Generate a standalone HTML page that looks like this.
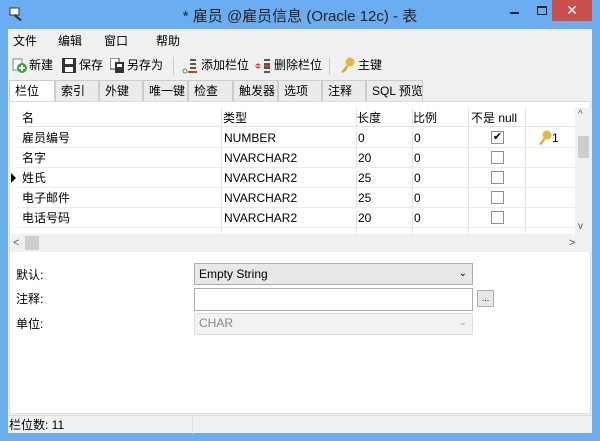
<!DOCTYPE html>
<html><head><meta charset="utf-8"><style>
*{margin:0;padding:0;box-sizing:border-box}
body{width:600px;height:441px;background:#6aadf0;font-family:"Liberation Sans","Noto Sans CJK SC",sans-serif;font-size:12px;line-height:14px;color:#000;position:relative;overflow:hidden;white-space:nowrap}
.a{position:absolute}
.title{left:0;top:8px;width:600px;text-align:center;font-size:15px;line-height:18px;color:#222}
.win{left:8px;top:29px;width:584px;height:404px;background:#f0f0f0}
.menu span{position:absolute;top:5px}
.tb{top:29px;font-size:12px}
.tab{top:51px;height:21px;border:1px solid #ccc;border-bottom:none;background:#ebebeb;padding:3px 0 0 5px;overflow:hidden}
.panel{left:1px;top:72px;width:582px;height:313px;background:#fff;border:1px solid #ddd}
.hd{top:6px;height:19px;border-bottom:1px solid #e3e3e3}
.row{height:20px;border-bottom:1px solid #ececec;width:558px;left:7px}
.row span,.hd span{position:absolute;top:3px}
.vl{width:1px;background:#e3e3e3;top:6px;height:125px}
.cb{width:13px;height:13px;border:1px solid #8e8f8f;background:#fff}
</style></head><body>
<svg class="a" style="left:9px;top:6px" width="16" height="16"><rect x="1" y="2" width="9" height="7" fill="#fff" stroke="#333"/><path d="M6 8 L13 14 L11 15 L5 10Z" fill="#333"/></svg>
<div class="a title">* 雇员 @雇员信息 (Oracle 12c) - 表</div>
<div class="a" style="left:510px;top:12px;width:9px;height:2px;background:#222"></div>
<div class="a" style="left:537px;top:6px;width:10px;height:9px;border:1px solid #222;border-top-width:2px"></div>
<div class="a" style="left:552px;top:0;width:40px;height:21px;background:#c8504b;color:#fff;text-align:center;font-size:14px;line-height:20px">✕</div>
<div class="a win">
 <div class="menu"><span style="left:5px">文件</span><span style="left:50px">编辑</span><span style="left:96px">窗口</span><span style="left:148px">帮助</span></div>
 <svg class="a" style="left:4px;top:29px" width="16" height="16"><rect x="1" y="1" width="9" height="11" fill="#fff" stroke="#789"/><circle cx="10" cy="10" r="5" fill="#3aa63a"/><path d="M10 7v6M7 10h6" stroke="#fff" stroke-width="2"/></svg>
 <span class="a tb" style="left:21px">新建</span>
 <svg class="a" style="left:54px;top:29px" width="14" height="15"><rect x="0" y="0" width="14" height="15" fill="#333"/><rect x="3" y="1" width="8" height="5" fill="#fff"/><rect x="3" y="9" width="8" height="5" fill="#fff"/></svg>
 <span class="a tb" style="left:71px">保存</span>
 <svg class="a" style="left:102px;top:29px" width="15" height="15"><rect x="0" y="0" width="9" height="11" fill="#fff" stroke="#333"/><rect x="5" y="4" width="9" height="11" fill="#333"/><rect x="7" y="6" width="5" height="3" fill="#fff"/></svg>
 <span class="a tb" style="left:119px">另存为</span>
 <div class="a" style="left:165px;top:28px;width:1px;height:18px;background:#ccc"></div>
 <svg class="a" style="left:174px;top:29px" width="16" height="16"><circle cx="3" cy="13" r="2" fill="none" stroke="#3a3"/><path d="M8 2h6M8 6h6M8 10h6" stroke="#555" stroke-width="2"/><path d="M6 14h9" stroke="#d33" stroke-width="2"/></svg>
 <span class="a tb" style="left:193px">添加栏位</span>
 <svg class="a" style="left:247px;top:29px" width="16" height="16"><circle cx="3" cy="8" r="2.5" fill="#d33"/><path d="M1 8h5" stroke="#fff"/><path d="M9 2h6M9 6h6M9 10h6M9 14h6" stroke="#555" stroke-width="2"/><path d="M9 8h6" stroke="#d33" stroke-width="2"/></svg>
 <span class="a tb" style="left:266px">删除栏位</span>
 <div class="a" style="left:321px;top:28px;width:1px;height:18px;background:#ccc"></div>
 <svg class="a" style="left:331px;top:28px" width="16" height="17"><circle cx="11" cy="5" r="4.5" fill="#e8b73a"/><path d="M8 8 L2 15 L4 16 L5 14 L6 15 L9 10" fill="#d9a52a"/></svg>
 <span class="a tb" style="left:350px">主键</span>
 <div class="a tab" style="left:1px;width:46px;background:#fff;height:23px;border-color:#ccc">栏位</div>
 <div class="a tab" style="left:47px;width:44px">索引</div>
 <div class="a tab" style="left:91px;width:44px">外键</div>
 <div class="a tab" style="left:135px;width:45px">唯一键</div>
 <div class="a tab" style="left:180px;width:45px">检查</div>
 <div class="a tab" style="left:225px;width:45px">触发器</div>
 <div class="a tab" style="left:270px;width:44px">选项</div>
 <div class="a tab" style="left:314px;width:44px">注释</div>
 <div class="a tab" style="left:358px;width:57px">SQL 预览</div>
 <div class="a panel">
  <div class="a hd" style="left:7px;width:558px"><span style="left:5px">名</span><span style="left:206px">类型</span><span style="left:340px">长度</span><span style="left:396px">比例</span><span style="left:454px">不是 null</span></div>
  <div class="a vl" style="left:211px"></div><div class="a vl" style="left:346px"></div><div class="a vl" style="left:402px"></div><div class="a vl" style="left:458px"></div><div class="a vl" style="left:515px"></div>
  <div class="a row" style="top:26px"><span style="left:5px">雇员编号</span><span style="left:207px">NUMBER</span><span style="left:341px">0</span><span style="left:397px">0</span><div class="a cb" style="left:474px;top:3px;font-size:11px;line-height:11px;text-align:center">✔</div>
   <svg class="a" style="left:521px;top:2px" width="14" height="16"><circle cx="9" cy="5" r="4.5" fill="#e8b73a"/><path d="M6 8 L1 14 L3 15 L7 10" fill="#d9a52a"/></svg><span style="left:535px">1</span></div>
  <div class="a row" style="top:46px"><span style="left:5px">名字</span><span style="left:207px">NVARCHAR2</span><span style="left:341px">20</span><span style="left:397px">0</span><div class="a cb" style="left:474px;top:3px"></div></div>
  <div class="a row" style="top:66px"><span style="left:5px">姓氏</span><span style="left:207px">NVARCHAR2</span><span style="left:341px">25</span><span style="left:397px">0</span><div class="a cb" style="left:474px;top:3px"></div></div>
  <div class="a" style="left:1px;top:71px;width:0;height:0;border-left:5px solid #000;border-top:5px solid transparent;border-bottom:5px solid transparent"></div>
  <div class="a row" style="top:86px"><span style="left:5px">电子邮件</span><span style="left:207px">NVARCHAR2</span><span style="left:341px">25</span><span style="left:397px">0</span><div class="a cb" style="left:474px;top:3px"></div></div>
  <div class="a row" style="top:106px"><span style="left:5px">电话号码</span><span style="left:207px">NVARCHAR2</span><span style="left:341px">20</span><span style="left:397px">0</span><div class="a cb" style="left:474px;top:3px"></div></div>
  <div class="a" style="left:565px;top:6px;width:16px;height:126px;background:#f0f0f0"></div>
  <div class="a" style="left:568px;top:34px;width:11px;height:22px;background:#cdcdcd"></div>
  <div class="a" style="left:568px;top:6px;font-size:10px;color:#555">^</div>
  <div class="a" style="left:568px;top:118px;font-size:10px;color:#555">v</div>
  <div class="a" style="left:0;top:132px;width:581px;height:18px;background:#f0f0f0"></div>
  <div class="a" style="left:15px;top:134px;width:14px;height:14px;background:#cdcdcd"></div>
  <div class="a" style="left:3px;top:134px;font-size:11px;color:#555">&lt;</div>
  <div class="a" style="left:559px;top:134px;font-size:11px;color:#555">&gt;</div>
  <span class="a" style="left:6px;top:166px">默认:</span>
  <div class="a" style="left:184px;top:161px;width:279px;height:22px;background:#e8e8e8;border:1px solid #adadad;padding:3px 4px">Empty String<span style="position:absolute;right:5px;top:3px;font-size:10px">&#8964;</span></div>
  <span class="a" style="left:6px;top:190px">注释:</span>
  <div class="a" style="left:184px;top:186px;width:279px;height:23px;background:#fff;border:1px solid #abadb3"></div>
  <div class="a" style="left:467px;top:188px;width:17px;height:17px;background:#e8e8e8;border:1px solid #adadad;font-size:9px;text-align:center">...</div>
  <span class="a" style="left:6px;top:215px">单位:</span>
  <div class="a" style="left:184px;top:211px;width:279px;height:22px;background:#f2f2f2;border:1px solid #ddd;padding:2px 4px;color:#888">CHAR<span style="position:absolute;right:5px;top:2px;font-size:10px;color:#aaa">&#8964;</span></div>
 </div>
 <div class="a" style="left:0;top:386px;width:584px;height:18px;background:#f0f0f0;border-top:1px solid #ddd"><span style="position:absolute;left:1px;top:2px">栏位数: 11</span><div class="a" style="left:184px;top:0;width:1px;height:18px;background:#ddd"></div></div>
</div>
</body></html>
